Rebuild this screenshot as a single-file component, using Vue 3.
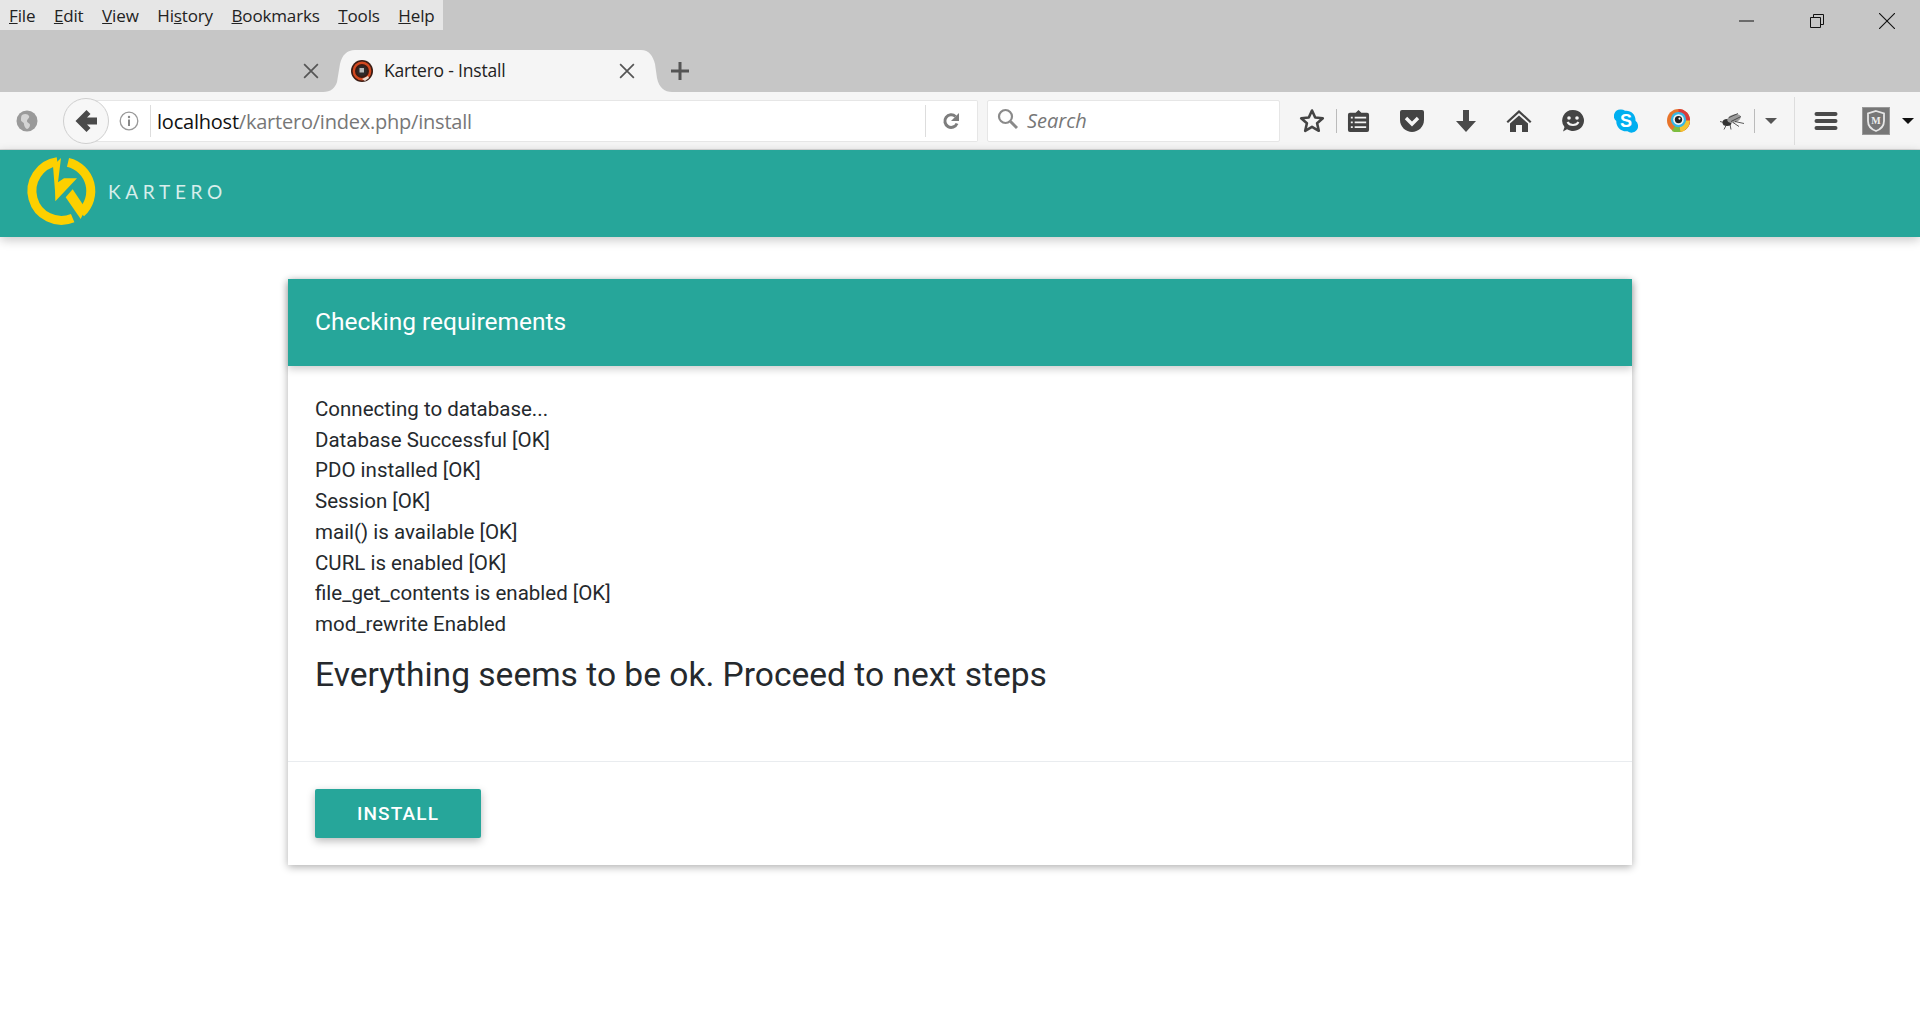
<script setup>
const menus = [
  { k: 'F', r: 'ile' }, { k: 'E', r: 'dit' }, { k: 'V', r: 'iew' },
  { p: 'Hi', k: 's', r: 'tory' }, { k: 'B', r: 'ookmarks' }, { k: 'T', r: 'ools' }, { k: 'H', r: 'elp' }
]
const lines = [
  'Connecting to database...', 'Database Successful [OK]', 'PDO installed [OK]', 'Session [OK]',
  'mail() is available [OK]', 'CURL is enabled [OK]', 'file_get_contents is enabled [OK]', 'mod_rewrite Enabled'
]
</script>

<template>
  <div class="page">
    <div class="chrome">
      <div class="titlebar">
        <nav class="menu">
          <span v-for="m in menus" :key="m.r" class="menu-item">{{ m.p }}<u>{{ m.k }}</u>{{ m.r }}</span>
        </nav>
        <div class="winctl">
          <svg class="wc" viewBox="0 0 16 16"><path d="M0 8h15" stroke="#111" fill="none"/></svg>
          <svg class="wc" viewBox="0 0 16 16"><path d="M1.500 4.500h10v10h-10zM4.500 4.500v-3h10v10h-3" stroke="#111" fill="none"/></svg>
          <svg class="wc" viewBox="0 0 16 16"><path d="M0 0l16 16M16 0L0 16" stroke="#111" fill="none" stroke-width="1.100"/></svg>
        </div>
      </div>
      <div class="tabstrip">
        <div class="tab-inactive">
          <svg class="tabx" viewBox="0 0 14 14"><path d="M1 1l12 12M13 1L1 13" stroke="#555" stroke-width="1.500" fill="none"/></svg>
        </div>
        <div class="tab-active">
          <svg class="tab-shape" viewBox="0 0 349 42"><path d="M0 42C8 42 12 38 14 32L17 14C19 5 24 0 32 0H318C326 0 330 6 332 14L334 28C336 38 342 42 349 42Z" fill="#f5f5f5"/></svg>
          <svg class="favicon" viewBox="0 0 22 22">
            <circle cx="11" cy="11" r="11" fill="#3a1c14"/>
            <circle cx="11" cy="11" r="8.200" fill="none" stroke="#d2481f" stroke-width="2.400"/>
            <circle cx="11" cy="11" r="5" fill="#2e2a2a"/>
            <rect x="8.500" y="8" width="4.500" height="4.500" fill="#b9b9b9"/>
            <path d="M11 19l6-3 1 2-4 3z" fill="#e9d6cc"/>
          </svg>
          <span class="tab-title">Kartero - Install</span>
          <svg class="tabx" viewBox="0 0 14 14"><path d="M1 1l12 12M13 1L1 13" stroke="#555" stroke-width="1.500" fill="none"/></svg>
        </div>
        <svg class="plus" viewBox="0 0 18 18"><path d="M9 0v18M0 9h18" stroke="#555" stroke-width="3" fill="none"/></svg>
      </div>
      <div class="toolbar">
        <svg class="globe" viewBox="0 0 22 22">
          <circle cx="11" cy="11" r="10.500" fill="#9a9a9a"/>
          <path d="M6 5c3-2 6-1 7 1s-2 3-2 5 3 2 3 4-2 4-3 4-3-3-3-5-3-2-3-4 0-4 1-5z" fill="#d4d4d4"/>
        </svg>
        <div class="back">
          <svg viewBox="0 0 24 24" class="back-ic"><path d="M12.500 1L1.500 12l11 11 4-4L13 15.500h10v-7H13L16.500 5z" fill="#4a4a4a"/></svg>
        </div>
        <div class="urlbar">
          <svg class="info" viewBox="0 0 20 20">
            <circle cx="10" cy="10" r="8.800" fill="none" stroke="#999" stroke-width="1.300"/>
            <circle cx="10" cy="6" r="1.200" fill="#888"/>
            <rect x="9" y="8.500" width="2" height="6.500" fill="#888"/>
          </svg>
          <span class="vsep first"></span>
          <span class="url"><span class="host">localhost</span>/kartero/index.php/install</span>
          <span class="vsep last"></span>
          <svg class="reload" viewBox="0 0 20 20"><path d="M16 12.500A6.300 6.300 0 1 1 14.500 5.500" fill="none" stroke="#7d7d7d" stroke-width="3"/><path d="M18 2v8h-8z" fill="#7d7d7d"/></svg>
        </div>
        <div class="searchbar">
          <svg class="mag" viewBox="0 0 22 22"><circle cx="8.500" cy="8.500" r="6.500" fill="none" stroke="#8a8a8a" stroke-width="2.200"/><path d="M13.500 13.500L20 20" stroke="#8a8a8a" stroke-width="3"/></svg>
          <span class="search-ph">Search</span>
        </div>
        <div class="tools">
          <svg class="ti star" viewBox="0 0 26 26"><path d="M13 2.500l3.200 7 7.600.8-5.700 5 1.700 7.500L13 18.800 6.200 22.800l1.700-7.500-5.700-5 7.600-.8z" fill="none" stroke="#444" stroke-width="2.600" stroke-linejoin="round"/></svg>
          <span class="tsep"></span>
          <svg class="ti reader" viewBox="0 0 24 26"><path d="M3 5h6l3-3 3 3h6a2 2 0 0 1 2 2v16a2 2 0 0 1-2 2H3a2 2 0 0 1-2-2V7a2 2 0 0 1 2-2z" fill="#444"/><path d="M4 10h2M8 10h12M4 15h2M8 15h12M4 20h2M8 20h12" stroke="#f5f5f5" stroke-width="1.800"/></svg>
          <svg class="ti pocket" viewBox="0 0 26 24"><path d="M3 1h20a2 2 0 0 1 2 2v8c0 7-6 12-12 12S1 18 1 11V3a2 2 0 0 1 2-2z" fill="#444"/><path d="M7 9l6 6 6-6" fill="none" stroke="#f5f5f5" stroke-width="3.400"/></svg>
          <svg class="ti dl" viewBox="0 0 24 24"><path d="M9 1h6v11h7L12 23 2 12h7z" fill="#4a4a4a"/></svg>
          <svg class="ti home" viewBox="0 0 26 24"><path d="M13 1L.5 12.500l1.500 1.500L13 4l11 10 1.500-1.500z" fill="#444"/><path d="M13 6.500L4 14.500V23h6v-7h6v7h6v-8.500z" fill="#444"/></svg>
          <svg class="ti smile" viewBox="0 0 24 24"><path d="M12 1a11 10.500 0 1 1-6 19.300L2 22.500l1.500-4.500A10.500 10.500 0 0 1 12 1z" fill="#444"/><circle cx="8" cy="9" r="1.800" fill="#f5f5f5"/><circle cx="16" cy="9" r="1.800" fill="#f5f5f5"/><path d="M6.500 13c2 4 9 4 11 0" fill="none" stroke="#f5f5f5" stroke-width="2"/></svg>
          <div class="ti skype">
            <svg class="skype-blob" viewBox="0 0 24 24"><path d="M7 0.500a6.500 6.500 0 0 1 4 1.300c6-.8 11 4 10.500 10a6.500 6.500 0 0 1-8 10.500C7 23 2 18 2.300 12A6.500 6.500 0 0 1 7 .5z" fill="#00aff0"/></svg>
            <span class="skype-s">S</span>
          </div>
          <svg class="ti color" viewBox="0 0 24 24">
            <circle cx="12" cy="12" r="12" fill="#e8742a"/>
            <path d="M12 0a12 12 0 0 1 12 12 12 12 0 0 1-5 10L12 12z" fill="#d93b3b"/>
            <path d="M24 12a12 12 0 0 1-10 12l-2-12z" fill="#f4c430"/>
            <path d="M14 24a12 12 0 0 1-9-1l7-11z" fill="#7cbd3f"/>
            <circle cx="12" cy="11" r="8" fill="#36b7e6"/>
            <circle cx="12" cy="11" r="5.600" fill="#f2f2f2"/>
            <circle cx="12" cy="11" r="3.800" fill="#222"/>
            <circle cx="13" cy="10" r="1.100" fill="#fff"/>
          </svg>
          <svg class="ti bug" viewBox="0 0 26 20">
            <ellipse cx="8" cy="12" rx="4.500" ry="3.500" fill="#333"/>
            <ellipse cx="15" cy="8" rx="7" ry="4" fill="#9a9a9a" transform="rotate(-18 15 8)"/>
            <path d="M10 7l9-4M12 11l10-5M1 11l4 1M7 15l-2 4M11 14l1 5M14 12l6 4M16 11l9 2" stroke="#333" stroke-width=".8" fill="none"/>
          </svg>
          <span class="tsep after-bug"></span>
          <span class="caret grey"></span>
          <span class="tsep tall"></span>
          <svg class="ti burger" viewBox="0 0 24 20"><path d="M2.500 3h19M2.500 10h19M2.500 17h19" stroke="#4a4a4a" stroke-width="4" stroke-linecap="round"/></svg>
          <div class="mbadge">
            <svg viewBox="0 0 20 22" class="shield"><path d="M10 1l8 2.500V11c0 5-4 8.500-8 10-4-1.500-8-5-8-10V3.500z" fill="none" stroke="#e6e6e6" stroke-width="1.800"/></svg>
            <span class="m">M</span>
          </div>
          <span class="caret black"></span>
        </div>
      </div>
    </div>

    <header class="apphead">
      <svg class="logo" viewBox="0 0 252 252">
        <g fill="none" stroke="#fdd000" stroke-width="27">
          <path d="M112 35A88.500 88.500 0 1 0 158 204.500"/>
          <path d="M144 37A88.500 88.500 0 0 1 183 189"/>
        </g>
        <g fill="#fdd000">
          <path d="M123 24L114 97 132 85H171L106 154 105 122 99 48z"/>
          <path d="M137 142L158 118 197 176 182 207z"/>
        </g>
      </svg>
      <span class="brand">KARTERO</span>
    </header>

    <main class="content">
      <section class="card">
        <div class="card-head">Checking requirements</div>
        <div class="card-body">
          <div v-for="l in lines" :key="l" class="line">{{ l }}</div>
          <h3 class="ok">Everything seems to be ok. Proceed to next steps</h3>
        </div>
        <div class="card-foot">
          <button class="install">INSTALL</button>
        </div>
      </section>
    </main>
  </div>
</template>

<style scoped>
.page { width: 1920px; height: 1011px; overflow: hidden; background: #fff; display: flex; flex-direction: column; }
.chrome { background: #c6c6c6; font-family: "Open Sans", "Noto Sans", sans-serif; }
.titlebar { height: 30px; display: flex; justify-content: space-between; }
.menu { width: 443px; height: 30px; background: #e6e6e6; display: flex; padding-left: 9px; box-sizing: border-box; gap: 18.600px; align-items: center; font-size: 17px; color: #222; letter-spacing: -0.15px; }
.winctl { display: flex; align-items: center; padding-right: 25px; gap: 54px; margin-top: 12px; }
.wc { width: 16px; height: 16px; display: block; }
.tabstrip { height: 62px; display: flex; align-items: flex-end; position: relative; }
.tab-inactive { width: 323px; height: 42px; display: flex; align-items: center; justify-content: flex-end; padding-right: 4px; box-sizing: border-box; }
.tab-active { width: 349px; height: 42px; position: relative; display: flex; align-items: center; padding-left: 28px; padding-right: 37px; box-sizing: border-box; flex: none; }
.tab-shape { position: absolute; left: 0; top: 0; width: 349px; height: 42px; }
.tabx { width: 16px; height: 16px; flex: none; position: relative; }
.favicon { width: 22px; height: 22px; flex: none; margin-right: 11px; position: relative; }
.tab-title { font-size: 17.500px; color: #222; flex: 1; letter-spacing: -0.2px; position: relative; margin-top: -2px; }
.plus { width: 18px; height: 18px; margin-left: -1px; margin-bottom: 12px; position: relative; }
.toolbar { height: 58px; background: #f5f5f5; border-bottom: 1px solid #d8d8d8; box-sizing: border-box; display: flex; align-items: center; padding-left: 16px; position: relative; }
.globe { width: 22px; height: 22px; margin-right: 25px; flex: none; }
.back { width: 46px; height: 46px; border: 1px solid #cfcfcf; border-radius: 50%; background: #f7f7f7; box-sizing: border-box; display: flex; align-items: center; justify-content: center; z-index: 1; flex: none; }
.back-ic { width: 24px; height: 24px; }
.urlbar { width: 892px; height: 42px; margin-left: -23px; padding-left: 33px; box-sizing: border-box; background: #fff; border: 1px solid #e6e6e6; border-left: 0; border-radius: 0 2px 2px 0; display: flex; align-items: center; flex: none; }
.info { width: 20px; height: 20px; flex: none; }
.vsep { width: 1px; height: 32px; background: #ddd; flex: none; }
.vsep.first { margin-left: 11px; margin-right: 6px; }
.vsep.last { margin-left: auto; margin-right: 15px; }
.url { font-size: 20px; color: #777; letter-spacing: -0.22px; margin-top: 1px; }
.host { color: #111; }
.reload { width: 20px; height: 20px; margin-right: 16px; flex: none; }
.searchbar { width: 293px; height: 42px; margin-left: 9px; box-sizing: border-box; background: #fff; border: 1px solid #e6e6e6; border-radius: 2px; display: flex; align-items: center; padding-left: 9px; flex: none; }
.mag { width: 22px; height: 22px; margin-top: -4px; flex: none; }
.search-ph { font-size: 20px; font-style: italic; color: #777; margin-left: 8px; }
.tools { display: flex; align-items: center; margin-left: 19px; flex: none; height: 100%; }
.ti { flex: none; display: block; }
.star { width: 26px; height: 26px; }
.tsep { width: 1px; height: 24px; background: #bbb; margin-left: 11px; flex: none; }
.tsep.after-bug { margin-left: 9px; }
.reader { width: 23px; height: 25px; margin-left: 10px; }
.pocket { width: 26px; height: 24px; margin-left: 29px; }
.dl { width: 24px; height: 24px; margin-left: 29px; }
.home { width: 26px; height: 24px; margin-left: 28px; }
.smile { width: 24px; height: 24px; margin-left: 29px; }
.skype { width: 24px; height: 24px; margin-left: 29px; position: relative; }
.skype-blob { width: 24px; height: 24px; position: absolute; left: 0; top: 0; }
.skype-s { position: relative; display: block; color: #fff; font: 700 18px/24px "Liberation Sans", sans-serif; text-align: center; }
.color { width: 23px; height: 23px; margin-left: 29px; }
.bug { width: 26px; height: 21px; margin-left: 29px; }
.caret { width: 0; height: 0; border-left: 6px solid transparent; border-right: 6px solid transparent; flex: none; }
.caret.grey { border-top: 6px solid #555; margin-left: 10px; }
.tsep.tall { height: 48px; background: #ddd; margin-left: 17px; }
.burger { width: 24px; height: 20px; margin-left: 19px; }
.mbadge { width: 28px; height: 28px; margin-left: 24px; background: #777; border: 1px solid #999; box-sizing: border-box; position: relative; flex: none; display: flex; align-items: center; justify-content: center; }
.shield { width: 20px; height: 22px; position: absolute; left: 3px; top: 2px; }
.m { font: 700 10px "Liberation Serif", serif; color: #eee; position: relative; }
.caret.black { border-top: 6px solid #111; margin-left: 12px; }
.apphead { height: 87px; background: #26a69a; display: flex; align-items: center; padding-left: 20px; box-shadow: 0 3px 10px rgba(0, 0, 0, 0.22); flex: none; position: relative; }
.logo { width: 84px; height: 84px; flex: none; margin-top: -3px; }
.brand { font-family: "Lato", sans-serif; font-size: 19px; letter-spacing: 4.700px; color: #d7eeeb; margin-left: 4px; margin-top: -5px; }
.content { padding: 42px 288px 0; font-family: Roboto, sans-serif; color: #25292d; }
.card { background: #fff; box-shadow: 0 2px 8px rgba(0, 0, 0, 0.32); }
.card-head { height: 87px; box-sizing: border-box; background: #26a69a; color: #fff; font-size: 24.500px; padding: 0 27px 2px; display: flex; align-items: center; box-shadow: 0 3px 8px rgba(0, 0, 0, 0.2); position: relative; }
.card-body { padding: 28px 27px 0; height: 396px; box-sizing: border-box; border-bottom: 1px solid #e9ecef; }
.line { font-size: 20.500px; line-height: 30.700px; }
.ok { font-weight: 400; font-size: 33.550px; line-height: 41px; margin: 14px 0 0; }
.card-foot { padding: 27px 27px 27px; }
.install { display: block; width: 166px; height: 49px; background: #26a69a; color: #fff; border: 0; border-radius: 2px; font-family: Roboto, sans-serif; font-weight: 500; font-size: 19px; letter-spacing: 1.150px; box-shadow: 0 3px 8px rgba(0, 0, 0, 0.28); }
</style>

<style>
html, body { margin: 0; padding: 0; background: #fff; }
</style>
